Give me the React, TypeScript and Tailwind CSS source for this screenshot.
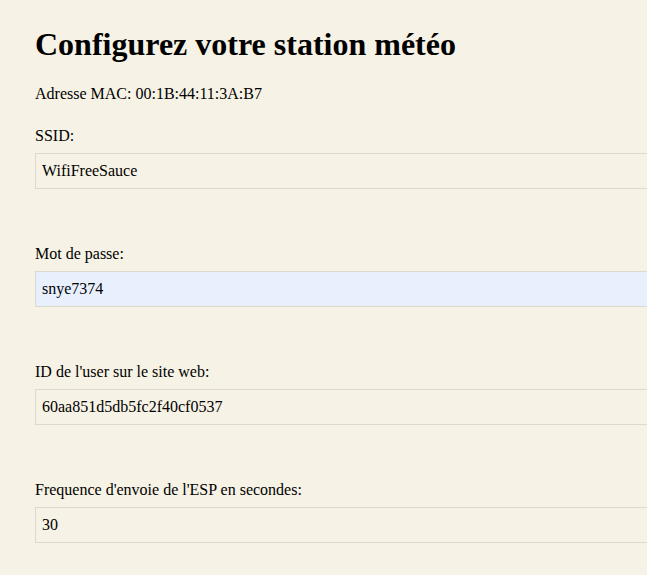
import React from "react";

const fields = [
  { id: "ssid", label: "SSID:", value: "WifiFreeSauce", autofill: false },
  { id: "password", label: "Mot de passe:", value: "snye7374", autofill: true },
  { id: "userId", label: "ID de l'user sur le site web:", value: "60aa851d5db5fc2f40cf0537", autofill: false },
  { id: "frequency", label: "Frequence d'envoie de l'ESP en secondes:", value: "30", autofill: false },
];

const serif = "font-[family-name:'Liberation_Serif','Times_New_Roman',serif]";

export default function App() {
  return (
    <div className={"h-screen overflow-hidden bg-[#f6f2e5] pl-[35px] pt-[26px] text-black " + serif}>
      <h1 className={"text-[32px] leading-[37px] font-bold " + serif}>Configurez votre station météo</h1>
      <p className={"mt-[22px] text-[16px] leading-[18px] " + serif}>Adresse MAC: 00:1B:44:11:3A:B7</p>

      <form className="mt-[24px] flex flex-col">
        {fields.map((field, i) => (
          <div key={field.id} className={i === 0 ? "" : "mt-[56px]"}>
            <label htmlFor={field.id} className={"block text-[16px] leading-[18px] " + serif}>
              {field.label}
            </label>
            <input
              id={field.id}
              type="text"
              defaultValue={field.value}
              className={
                "mt-[8px] block h-[36px] w-[640px] border border-[#dcd9cf] px-[6px] text-[16px] outline-none " +
                serif +
                (field.autofill ? " bg-[#e8f0fe]" : " bg-transparent")
              }
            />
          </div>
        ))}
      </form>
    </div>
  );
}
